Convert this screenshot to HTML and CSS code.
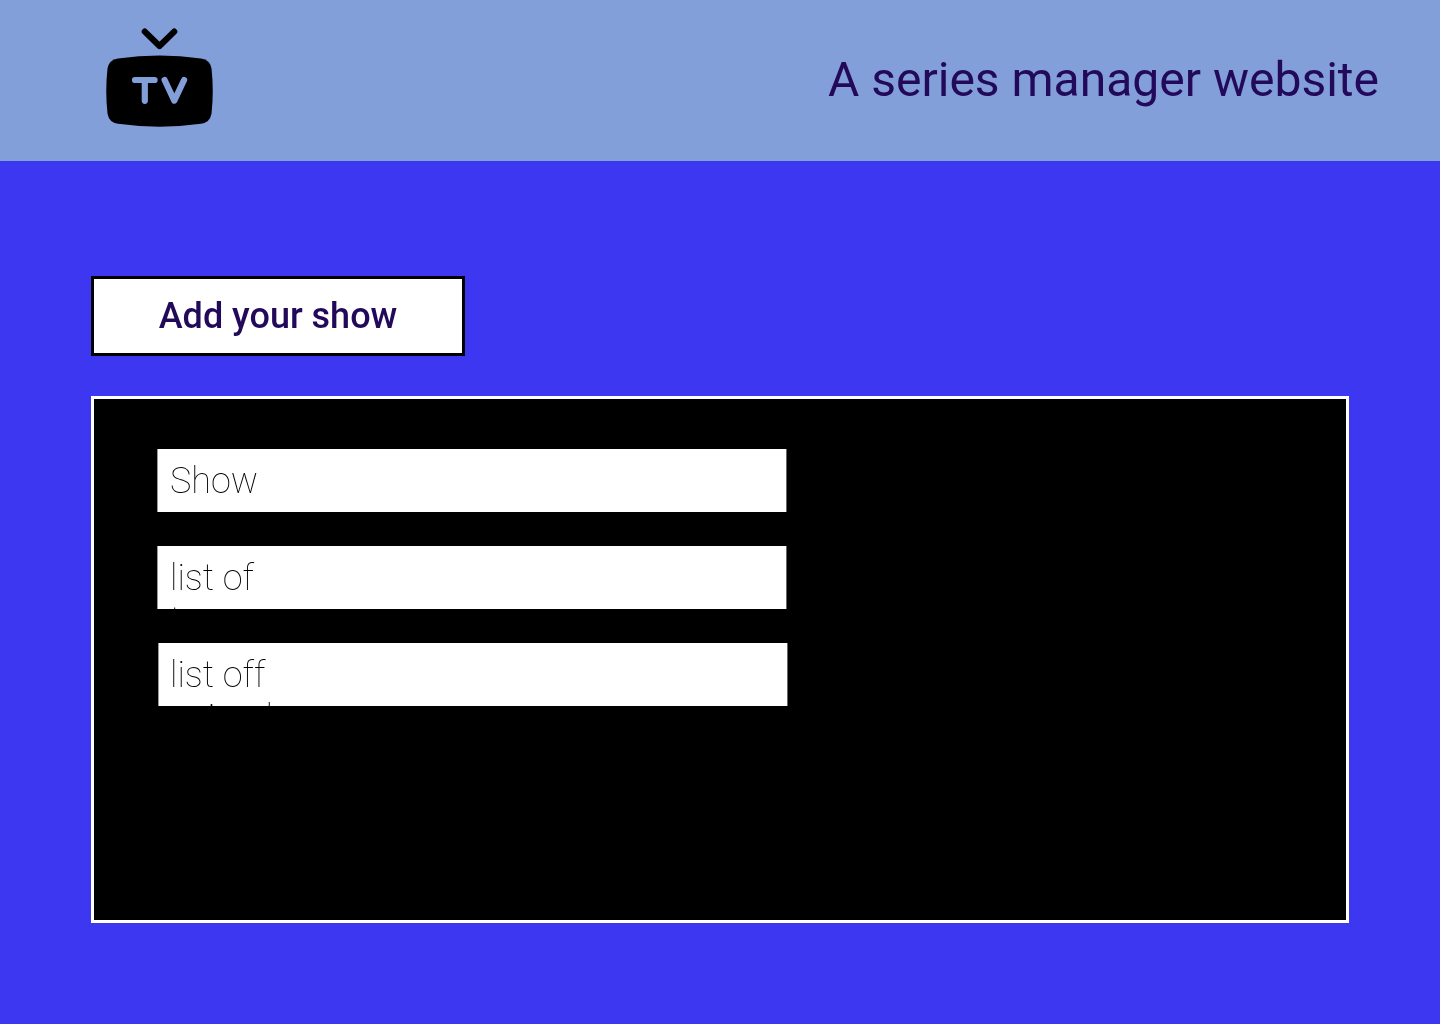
FILE: index.html
```html
<!DOCTYPE html>
<html lang="en">
<head>
<meta charset="utf-8">
<title>A series manager website</title>
<link rel="stylesheet" href="styles.css">
</head>
<body>
<header class="header">
  <svg class="logo" width="110" height="102" viewBox="105 27 110 102" role="img" aria-label="TV" fill="none" stroke-linecap="round" stroke-linejoin="round">
    <path d="M144.800 31.600 159.500 46 174.200 31.600" stroke="#000" stroke-width="6.200"/>
    <path d="M118 58.400Q159.500 52.600 201 58.400Q210 59.700 211.500 68.500Q214 91 211.500 113.500Q210 122.500 201 123.800Q159.500 129.600 118 123.800Q109 122.500 107.500 113.500Q105 91 107.500 68.500Q109 59.700 118 58.400Z" fill="#000"/>
    <path d="M135 80H154.600M144.800 80V100.800M164.600 80 174.300 100.600 184.100 80" stroke="#829fd9" stroke-width="6.200"/>
  </svg>
  <h1 class="title">A series manager website</h1>
</header>
<main class="main">
  <button class="add-button" type="button"><span class="add-label">Add your show</span></button>
  <section class="panel">
    <div class="field"><p class="field-text">Show</p></div>
    <div class="field"><p class="field-text">list of types</p></div>
    <div class="field field-last"><p class="field-text">list off episodes</p></div>
  </section>
</main>
</body>
</html>
```
FILE: styles.css
```css
* { box-sizing: border-box; }
body {
  margin: 0;
  min-height: 1024px;
  background: #3e37f2;
  font-family: Roboto, sans-serif;
}
.header {
  height: 161px;
  padding: 27px 61px 0 105px;
  display: flex;
  justify-content: space-between;
  align-items: flex-start;
  background: #829fd9;
}
.logo { display: block; }
.title {
  margin: 25px 0 0;
  color: #22095a;
  font-size: 48px;
  font-weight: 400;
  line-height: 56px;
  will-change: transform;
}
.main {
  padding: 115px 91px 0;
  display: flex;
  flex-direction: column;
  align-items: flex-start;
  gap: 40px;
}
.add-button {
  width: 374px;
  height: 80px;
  padding: 0;
  border: 3px solid #000;
  background: #fff;
  color: #22095a;
  font: 500 36px/42px Roboto, sans-serif;
}
.add-label {
  display: block;
  will-change: transform;
}
.panel {
  width: 1258px;
  height: 527px;
  padding: 50px 63px;
  border: 3px solid #fff;
  background: #000;
  display: flex;
  flex-direction: column;
  gap: 34px;
}
.field {
  width: 629px;
  height: 63px;
  padding: 11px 12px 0;
  overflow: hidden;
  background: #fff;
  transform: translateX(0.4px);
}
.field-last {
  margin-left: 1px;
  padding-left: 11px;
}
.field-text {
  width: 124px;
  margin: 0;
  color: #000;
  font-size: 36px;
  font-weight: 100;
  line-height: 43px;
  transform: translateX(0.6px);
  will-change: transform;
}
```
